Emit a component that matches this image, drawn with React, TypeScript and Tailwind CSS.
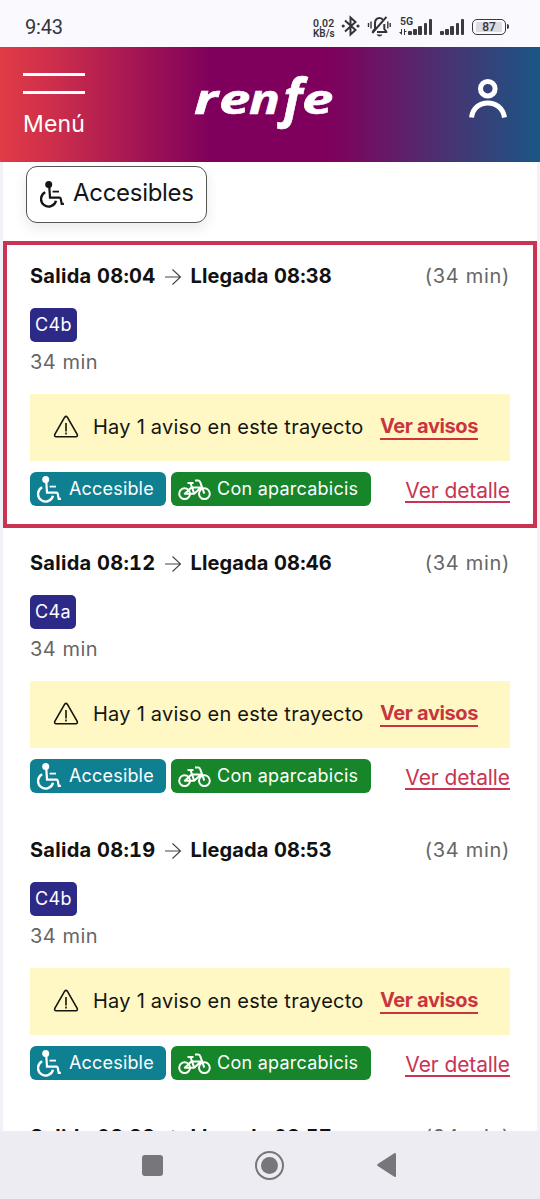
type Trip = {
  from: string;
  to: string;
  line: string;
  selected?: boolean;
};

const trips: Trip[] = [
  { from: "08:04", to: "08:38", line: "C4b", selected: true },
  { from: "08:12", to: "08:46", line: "C4a" },
  { from: "08:19", to: "08:53", line: "C4b" },
  { from: "08:23", to: "08:57", line: "C4b" },
];

function Wheelchair({ className = "" }: { className?: string }) {
  return (
    <svg width="26" height="28" viewBox="0 0 26 28" fill="none" stroke="currentColor" strokeWidth="2.2" className={className}>
      <circle cx="8.7" cy="4.600" r="3.5" fill="currentColor" stroke="none" />
      <path d="M9.3 7 10 17.6H19.600q.9 0 1.100 1l1 5.300h2.200" />
      <path d="M12.6 11.600h6.4" strokeWidth="1.8" />
      <path d="M5.2 12.200A7.6 7.6 0 1 0 16 20.800" strokeWidth="2.4" />
    </svg>
  );
}

function Bicycle() {
  return (
    <svg width="34" height="24" viewBox="0 0 34 24" fill="none" stroke="currentColor" strokeWidth="2" strokeLinejoin="round" className="mt-[2px]">
      <circle cx="6.6" cy="15.7" r="5.4" />
      <circle cx="26.4" cy="15.7" r="5.4" />
      <path d="M9.500 5h6M12.5 5l3.700 10.700H6.8l6.600-6.200h9.600L16.200 15.7" />
      <path d="M17 2.600h3.300q1.500 0 2 1.800l4 11.300" />
    </svg>
  );
}

function Bars({ heights }: { heights: number[] }) {
  return (
    <span className="flex items-end gap-[1.5px]">
      {heights.map((h, i) => (
        <span key={i} className="w-[3.7px] rounded-[1px] bg-[#3a3b42]" style={{ height: h }} />
      ))}
    </span>
  );
}

function StatusBar() {
  return (
    <div className="flex h-[47px] shrink-0 items-start bg-[#f9f9fe] pl-[25px] pt-[16px] font-[Roboto] text-[#34353c]">
      <span className="w-[288px] text-[20px] leading-[23px] tracking-[-0.2px]">9:43</span>
      <span className="flex w-[28px] flex-col pt-[2px] font-semibold">
        <span className="text-[10.5px] leading-[11px] tracking-[0.3px]">0,02</span>
        <span className="text-[10px] leading-[10px]">KB/s</span>
      </span>
      <svg width="20" height="22" viewBox="0 0 20 22" fill="none" stroke="currentColor" strokeWidth="2" className="-mt-px">
        <path d="M4 5.5 14.5 15 9.5 19.5V2.5L14.5 7 4 16.5" />
        <circle cx="2.2" cy="11" r="1.6" fill="currentColor" stroke="none" />
        <circle cx="17" cy="11" r="1.6" fill="currentColor" stroke="none" />
      </svg>
      <svg width="24" height="24" viewBox="0 0 24 24" fill="none" stroke="currentColor" strokeWidth="2" className="-mt-px ml-[6px]">
        <path d="M8 14V8.5Q8 3 12.5 3 15 3 16 5M17.3 9v5l2 2.5v.5H10M5.5 17l2.5-3" />
        <path d="M19.5 1.8 5.3 18" />
        <path d="M1.5 8v4M4 6.5v7M20.8 6.5v7M23.2 8v4" strokeWidth="1.4" />
        <path d="M9.5 19.500h6q-1 2-3 2t-3-2Z" fill="currentColor" stroke="none" />
      </svg>
      <span className="relative ml-[8px] flex h-[19px] w-[35px] items-end pl-[9px]">
        <span className="absolute left-[1px] top-[1px] text-[10.5px] font-semibold leading-[10px]">5G</span>
        <svg width="8" height="6" viewBox="0 0 8 6" className="absolute bottom-0 left-0">
          <path d="M0 3h3v3ZM2 0h1v6H2ZM5 0h1v6H5ZM5 0l3 3H5Z" fill="currentColor" />
        </svg>
        <Bars heights={[4, 6, 9, 12, 16]} />
      </span>
      <span className="ml-[6px] flex h-[19px] w-[25px] items-end">
        <Bars heights={[4, 6, 9, 12, 16]} />
      </span>
      <span className="ml-[7px] mt-[3px] flex h-[16px] w-[34px] items-center justify-center rounded-[5px] border-[1.5px] border-[#3a3b42] px-[3px]">
        <span className="flex h-[10px] w-full items-center justify-center rounded-[1px] bg-[#dcdce2] text-[12px] font-medium leading-none">87</span>
      </span>
      <span className="ml-[1px] mt-[8px] h-[5px] w-[2px] rounded-r bg-[#3a3b42]" />
    </div>
  );
}

function Logo() {
  return (
    <svg width="150" height="66" viewBox="0 0 150 66" fill="#fff" stroke="#fff" strokeWidth="0.6" className="overflow-visible font-['Open_Sans'] font-bold italic">
      <text fontSize="42" transform="translate(6 43) scale(1.35 1)">r</text>
      <text fontSize="42" transform="translate(31 43) scale(1.34 1)">e</text>
      <text fontSize="42" transform="translate(61 43) scale(1.22 1)">n</text>
      <text fontSize="52" transform="translate(95 45)">f</text>
      <text fontSize="42" transform="translate(114 43) scale(1.34 1)">e</text>
    </svg>
  );
}

function Header() {
  return (
    <header className="flex h-[115px] shrink-0 bg-[linear-gradient(90deg,#e03b46_0%,#ca2c4b_11%,#7f005c_39%,#7f005c_60%,#7a065f_64%,#4d2f70_81%,#1a5684_100%)] text-white">
      <div className="flex w-[188px] flex-col pl-[23px] pt-[26px]">
        <span className="h-[3px] w-[62px] bg-white" />
        <span className="mt-[15px] h-[3px] w-[62px] bg-white" />
        <span className="mt-[15px] text-[23px] leading-[30px] tracking-[0.2px]">Menú</span>
      </div>
      <div className="w-[280px] pt-[24px]">
        <Logo />
      </div>
      <svg width="40" height="44" viewBox="0 0 40 44" fill="none" stroke="#fff" strokeWidth="5" className="mt-[29px]">
        <circle cx="19.8" cy="12.700" r="7.3" />
        <path d="M3.5 41.5C6 22 33.500 22 36.500 41.500" />
      </svg>
    </header>
  );
}

function TripCard({ trip }: { trip: Trip }) {
  return (
    <article
      className={`h-[287px] shrink-0 border-[4px] px-[23px] pt-[17px] ${trip.selected ? "border-[#c93453]" : "border-transparent"}`}
    >
      <div className="flex h-[28px] items-center text-[20px] text-[#111]">
        <span className="-mt-px font-bold tabular-nums tracking-[0.27px]">Salida {trip.from}</span>
        <svg width="18" height="18" viewBox="0 0 18 18" fill="none" stroke="#444" strokeWidth="1.1" className="ml-[9px] mr-[8px] mt-[2px]">
          <path d="M1 9h15.500M8.500 1.500 16.500 9l-8 7.500" />
        </svg>
        <span className="-mt-px font-bold tabular-nums tracking-[0.13px]">Llegada {trip.to}</span>
        <span className="ml-auto tracking-[0.7px] text-[#666]">(34 min)</span>
      </div>
      <div className="mt-[18px] flex h-[34px] w-fit items-center rounded-[5px] bg-[#2d2a87] px-[5px] pb-px text-[18px] tracking-[0.4px] text-white">
        {trip.line}
      </div>
      <div className="mt-[6px] h-[28px] text-[20px] leading-[28px] tracking-[0.5px] text-[#666]">34 min</div>
      <div className="mt-[18px] flex h-[67px] items-center bg-[#fff8c4] pl-[23px] text-[20px] text-[#151510]">
        <svg width="26" height="26" viewBox="0 0 26 26" fill="none" stroke="currentColor" strokeWidth="1.6" strokeLinejoin="round" className="-mt-[2px]">
          <path d="M11.700 3.200q1.300-1.600 2.600 0l9.900 17.200q.7 2.300-1.400 2.400H3.200q-2.100-.1-1.400-2.400Z" />
          <path d="M13 9v8.500M13 18.600v2" />
        </svg>
        <span className="-mt-px ml-[14px] w-[287px] whitespace-nowrap tracking-[0.24px]">Hay 1 aviso en este trayecto</span>
        <span className="-mt-px whitespace-nowrap border-b-2 border-[#c9343f] font-bold leading-[23px] tracking-[-0.38px] text-[#c9343f]">Ver avisos</span>
      </div>
      <div className="mt-[11px] flex h-[34px] items-center">
        <span className="flex h-[34px] w-[136px] items-center rounded-[6px] bg-[#0f7f92] pl-[7px] text-[18px] text-white">
          <Wheelchair />
          <span className="-mt-[2px] ml-[6px] tracking-[0.18px]">Accesible</span>
        </span>
        <span className="ml-[5px] flex h-[34px] w-[200px] items-center rounded-[6px] bg-[#178529] pl-[7px] text-[18px] text-white">
          <Bicycle />
          <span className="-mt-[2px] ml-[5px] whitespace-nowrap tracking-[0.25px]">Con aparcabicis</span>
        </span>
        <span className="ml-auto mt-[5px] whitespace-nowrap border-b-2 border-[#c93453] text-[21px] leading-[20px] tracking-[-0.1px] text-[#c93453]">Ver detalle</span>
      </div>
    </article>
  );
}

function NavBar() {
  return (
    <nav className="flex h-[68px] shrink-0 items-center bg-[#edecf2] pl-[142px] text-[#77767a]">
      <span className="h-[21px] w-[21px] rounded-[3px] bg-[#77767a]" />
      <span className="ml-[92px] flex h-[29px] w-[29px] items-center justify-center rounded-full border-2 border-[#77767a]">
        <span className="h-[17px] w-[17px] rounded-full bg-[#77767a]" />
      </span>
      <svg width="22" height="26" viewBox="0 0 22 26" fill="currentColor" className="ml-[92px]">
        <path d="M1.700 12Q.5 13 1.700 14l16.600 10.800q1.700.7 1.700-1V2.200q0-1.700-1.700-1Z" />
      </svg>
    </nav>
  );
}

export default function App() {
  return (
    <div className="flex h-[1199px] w-[540px] flex-col overflow-hidden bg-[#f1f2f7] font-[Inter]">
      <StatusBar />
      <Header />
      <main className="mx-[3px] flex min-h-0 flex-1 flex-col overflow-hidden bg-white">
        <div className="h-[79px] shrink-0 pl-[23px] pt-[4px]">
          <button className="flex h-[57px] w-[181px] items-center rounded-[11px] border border-[#555] bg-white pl-[13px] text-[24px] text-[#151515] shadow-[0_5px_14px_rgba(0,0,0,0.09)]">
            <Wheelchair className="-mt-[2px]" />
            <span className="-mt-[4px] ml-[7px] tracking-[-0.3px]">Accesibles</span>
          </button>
        </div>
        {trips.map((trip) => (
          <TripCard key={trip.from} trip={trip} />
        ))}
      </main>
      <NavBar />
    </div>
  );
}
